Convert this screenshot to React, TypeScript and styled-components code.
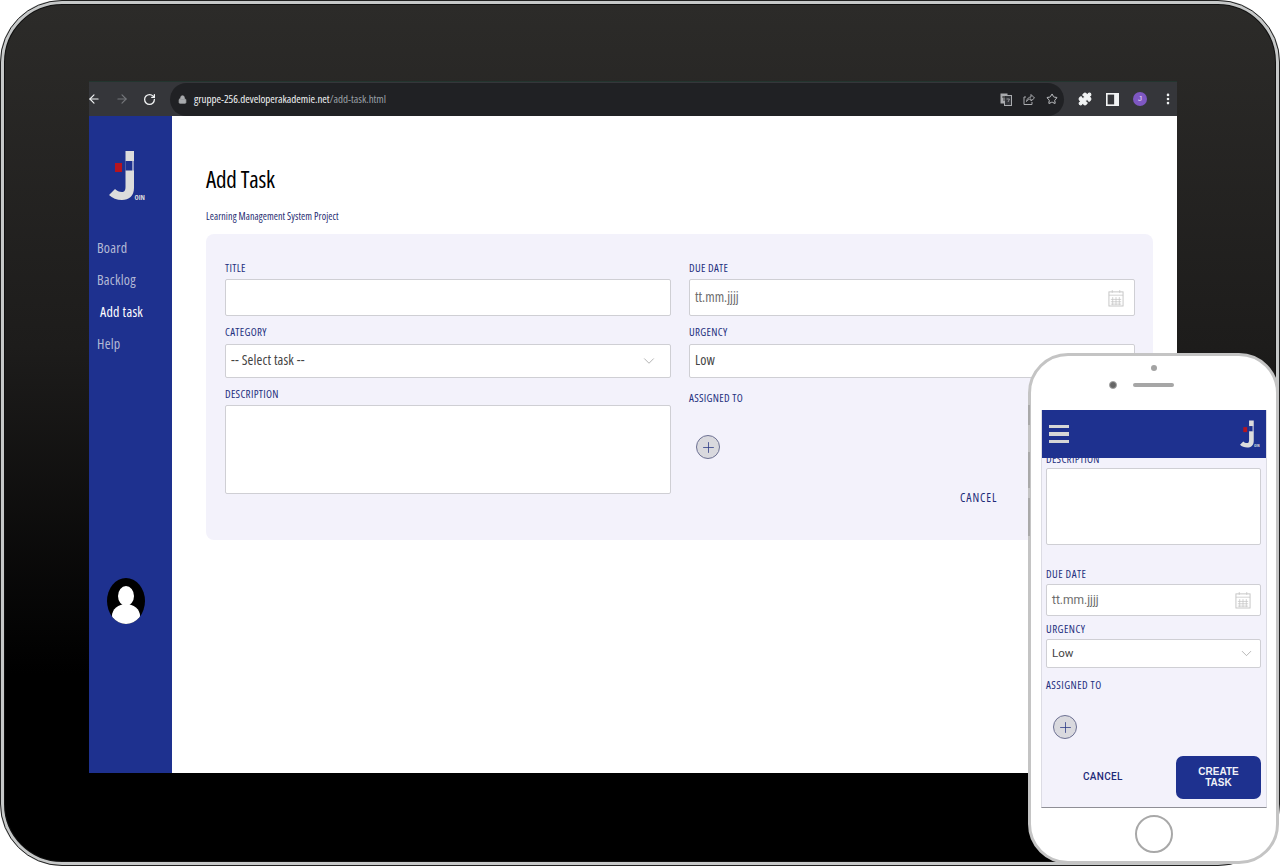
import React from "react";
import styled, { createGlobalStyle } from "styled-components";
import { ArrowLeft, ArrowRight, RotateCw, Lock, Star, Puzzle, EllipsisVertical, ChevronDown, Plus } from "lucide-react";

const NAVY = "#1e318f";
const PANEL = "#f3f2fb";
const NARROW = `"Open Sans", sans-serif`;

const Global = createGlobalStyle`
  html, body { margin: 0; padding: 0; background: #fff; }
  #root { width: 1280px; height: 866px; overflow: hidden; position: relative; font-stretch: 75%; }
  * { box-sizing: border-box; }
`;

const Stage = styled.div`
  position: relative;
  width: 1280px;
  height: 866px;
  background: #fff;
  overflow: hidden;
`;

const Tablet = styled.div`
  width: 1280px;
  height: 866px;
  padding: 77px 99px 89px 85px;
  border: 4px solid #c6c8c8;
  border-radius: 62px;
  background: linear-gradient(#2c2b29 0%, #1d1c1b 40%, #000 78%);
  box-shadow: 0 0 0 1px #111 inset;
  outline: 1px solid #222;
  outline-offset: -1px;
`;

const Screen = styled.div`
  width: 1088px;
  height: 692px;
  display: flex;
  flex-direction: column;
  background: #fff;
`;

const BrowserBar = styled.div`
  height: 35px;
  flex: none;
  display: flex;
  align-items: center;
  background: #35363a;
  border-top: 1px solid #23352f;
  color: #f1f3f4;
`;

const NavButtons = styled.div`
  width: 83px;
  margin-left: -2px;
  flex: none;
  display: flex;
  align-items: center;
  gap: 14px;
`;

const Omnibox = styled.div`
  width: 894px;
  height: 33px;
  flex: none;
  display: flex;
  align-items: center;
  gap: 7px;
  padding: 0 6px 0 8px;
  border-radius: 17px;
  background: #202124;
`;

const Url = styled.span`
  flex: 1;
  padding-bottom: 2px;
  font: 11px ${NARROW};
  font-stretch: 75%;
  letter-spacing: -0.03px;
  color: #f1f3f4;
`;

const UrlPath = styled.span`
  color: #9aa0a6;
`;

const OmniIcons = styled.div`
  display: flex;
  align-items: center;
  gap: 11px;
`;

const BarIcons = styled.div`
  flex: 1;
  display: flex;
  align-items: center;
  gap: 14px;
  padding-left: 14px;
`;

const Avatar = styled.div`
  width: 14px;
  height: 14px;
  border-radius: 50%;
  background: #7e57c2;
  color: #e8def8;
  font: 8px/14px "Liberation Sans", sans-serif;
  text-align: center;
`;

const Body = styled.div`
  flex: 1;
  display: flex;
  min-height: 0;
`;

const Sidebar = styled.nav`
  width: 83px;
  flex: none;
  display: flex;
  flex-direction: column;
  background: ${NAVY};
  padding-top: 34px;
`;

const SidebarLogo = styled.div`
  height: 52px;
  padding-left: 20px;
  margin-bottom: 38px;
`;

const NavLink = styled.a<{ $active?: boolean }>`
  display: block;
  height: 32px;
  padding-left: ${(p) => (p.$active ? 11 : 8)}px;
  font: 14px/16px ${NARROW};
  font-stretch: 75%;
  letter-spacing: 0.25px;
  color: ${(p) => (p.$active ? "#ffffff" : "#b4b9d6")};
`;

const UserMark = styled.div`
  width: 38px;
  height: 46px;
  margin: 210px 0 0 18px;
  position: relative;
  overflow: hidden;
  background: #000;
  border-radius: 50%;
`;

const UserHead = styled.div`
  position: absolute;
  left: 11px;
  top: 8px;
  width: 16px;
  height: 20px;
  border-radius: 50%;
  background: #fff;
`;

const UserBody = styled.div`
  position: absolute;
  left: 5px;
  top: 26px;
  width: 28px;
  height: 24px;
  border-radius: 50%;
  background: #fff;
`;

const Main = styled.main`
  flex: 1;
  padding: 50px 24px 0 34px;
`;

const Title = styled.h1`
  margin: 0;
  height: 26px;
  font: 400 23px/26px ${NARROW};
  font-stretch: 75%;
  letter-spacing: -0.2px;
  color: #000;
`;

const Subtitle = styled.p`
  margin: 18px 0 0;
  height: 12px;
  font: 10px/12px ${NARROW};
  font-stretch: 75%;
  letter-spacing: 0.09px;
  color: #1e2a70;
`;

const Card = styled.section`
  margin-top: 12px;
  height: 306px;
  padding: 27px 18px 0 19px;
  display: grid;
  grid-template-columns: 446px 446px;
  column-gap: 18px;
  border-radius: 8px;
  background: ${PANEL};
`;

const Column = styled.div`
  display: flex;
  flex-direction: column;
`;

const Label = styled.label<{ $gap?: number; $after?: number; $phone?: boolean }>`
  display: block;
  height: 14px;
  font: 11px/${(p) => (p.$phone ? 12 : 14)}px ${NARROW};
  font-stretch: 75%;
  letter-spacing: ${(p) => (p.$phone ? 0.45 : 0.3)}px;
  color: #24307e;
  margin-top: ${(p) => p.$gap ?? 0}px;
  margin-bottom: ${(p) => p.$after ?? 4}px;
`;

const Box = styled.div<{ $h: number; $phone?: boolean; $pr?: number }>`
  height: ${(p) => p.$h}px;
  display: flex;
  align-items: center;
  justify-content: space-between;
  padding: 0 ${(p) => p.$pr ?? 10}px 0 5px;
  background: #fff;
  border: 1px solid #cfcfd4;
  border-radius: 2px;
  font: ${(p) => (p.$phone ? `12px "Roboto", sans-serif` : `14px ${NARROW}`)};
  font-stretch: ${(p) => (p.$phone ? "100%" : "75%")};
  color: #444;
`;

const BoxText = styled.span<{ $phone?: boolean }>`
  padding-bottom: ${(p) => (p.$phone ? 2 : 3)}px;
  font-size: ${(p) => (p.$phone ? "11.5px" : "14px")};
  letter-spacing: ${(p) => (p.$phone ? 0 : 0.15)}px;
`;

const Placeholder = styled.span<{ $phone?: boolean }>`
  padding-bottom: ${(p) => (p.$phone ? 0 : 2)}px;
  color: #6d6d6d;
`;

const AddButton = styled.button<{ $left: number; $top: number }>`
  width: 24px;
  height: 24px;
  padding: 0;
  display: flex;
  align-items: center;
  justify-content: center;
  margin: ${(p) => p.$top}px 0 0 ${(p) => p.$left}px;
  border-radius: 50%;
  border: 1px solid #6d7193;
  background: #d9d9de;
  color: #2c3a86;
`;

const CancelDesktop = styled.span`
  align-self: flex-start;
  margin: 32px 0 0 271px;
  font: 12px/14px ${NARROW};
  font-stretch: 75%;
  color: #1e2a78;
  letter-spacing: 0.9px;
`;

const Phone = styled.div`
  position: absolute;
  left: 1028px;
  top: 353px;
  width: 251px;
  height: 511px;
  display: flex;
  flex-direction: column;
  align-items: center;
  padding: 54px 8px 0 9px;
  background: #fff;
  border: 3px solid #c4c4c4;
  border-radius: 40px;
`;

const SideKey = styled.div<{ $top: number; $h: number }>`
  position: absolute;
  left: -3px;
  top: ${(p) => p.$top}px;
  width: 2px;
  height: ${(p) => p.$h}px;
  background: #a9a9a9;
`;

const Sensor = styled.div`
  position: absolute;
  left: 120px;
  top: 9px;
  width: 6px;
  height: 6px;
  border-radius: 50%;
  background: #a3a3a3;
`;

const Camera = styled.div`
  position: absolute;
  left: 78px;
  top: 25px;
  width: 8px;
  height: 8px;
  border-radius: 50%;
  background: #666;
  border: 1.5px solid #a5a5a5;
`;

const Speaker = styled.div`
  position: absolute;
  left: 102px;
  top: 27px;
  width: 41px;
  height: 4px;
  border-radius: 2px;
  background: #a6a6a6;
`;

const PhoneScreen = styled.div`
  width: 226px;
  height: 398px;
  flex: none;
  display: flex;
  flex-direction: column;
  background: ${PANEL};
  border-bottom: 1px solid #8f8f96;
  border-left: 1px solid #dcdce4;
  border-right: 1px solid #dcdce4;
  overflow: hidden;
`;

const PhoneHeader = styled.header`
  height: 48px;
  flex: none;
  margin: 0 -1px;
  display: flex;
  align-items: center;
  justify-content: space-between;
  padding: 0 7px 0 8px;
  background: ${NAVY};
  position: relative;
  z-index: 1;
`;

const Burger = styled.div`
  width: 20px;
  display: flex;
  flex-direction: column;
  gap: 4px;
`;

const BurgerLine = styled.div`
  height: 3.5px;
  background: #d6d6d6;
`;

const PhoneContent = styled.div`
  flex: 1;
  padding: 0 5px 0 4px;
  display: flex;
  flex-direction: column;
`;

const Clipped = styled.div`
  height: 16px;
  margin-top: -6px;
`;

const PhoneActions = styled.div`
  display: flex;
  align-items: center;
  justify-content: space-between;
  margin-top: 17px;
`;

const PhoneCancel = styled.span`
  margin: 0 0 2px 37px;
  font: 500 10px "Roboto", sans-serif;
  color: #1e2a78;
  letter-spacing: 0.3px;
`;

const CreateButton = styled.button`
  width: 85px;
  height: 43px;
  padding: 0 0 2px;
  border: none;
  border-radius: 7px;
  background: ${NAVY};
  color: #f1f2f8;
  font: 700 10px/11px "Liberation Sans", sans-serif;
`;

const HomeButton = styled.div`
  width: 38px;
  height: 38px;
  margin-top: 7px;
  flex: none;
  border-radius: 50%;
  border: 2px solid #a8a8a8;
  background: #fff;
`;

const Logo = ({ scale = 1 }: { scale?: number }) => (
  <svg width={36 * scale} height={52 * scale} viewBox="0 0 36 52" aria-hidden>
    <path d="M16.500 1H25V38C25 46 20 50 13 50C8 50 3 48 0 45L6 39C8 41 10 42 13 42C15 42 16.500 41 16.500 37Z" fill="#dcdcdc" />
    <rect x="16.500" y="11" width="6.500" height="9.500" fill={NAVY} />
    <rect x="23" y="11" width="2" height="9.500" fill="#8f97c4" />
    <rect x="6" y="13" width="7" height="9" fill="#b5141f" />
    <text x="25.500" y="49.500" fontSize="7" fontWeight="700" fill="#dcdcdc" fontFamily="Open Sans, sans-serif" style={{ fontStretch: "75%" }}>OIN</text>
  </svg>
);

const Calendar = () => (
  <svg width="16" height="18" viewBox="0 0 17 19" fill="none" stroke="#c4c4c4" aria-hidden>
    <rect x="1" y="3" width="15" height="15" />
    <path d="M1 6.500h15M3 11h11M3 13.500h11M3 16h11M5 8.500v8.500M8.500 8.500v8.500M12 8.500v8.500M4.500 1v3M12.500 1v3" strokeWidth="0.8" />
  </svg>
);

const Translate = () => (
  <svg width="12" height="13" viewBox="0 0 12 13" fill="none" aria-hidden>
    <rect x="0.500" y="0.500" width="7" height="10" fill="#a9abae" />
    <rect x="4.500" y="2.500" width="7" height="10" fill="#33353a" stroke="#a9abae" />
    <path d="M2 4h4M4 3v5" stroke="#222" strokeWidth="0.8" />
    <path d="M6.500 6h3M8 9l1.500-3" stroke="#a9abae" strokeWidth="0.8" />
  </svg>
);

const ShareIcon = () => (
  <svg width="12" height="12" viewBox="0 0 12 12" fill="none" stroke="#a9abae" strokeWidth="1" aria-hidden>
    <path d="M3 4H1v7.500h8V9M3.500 8.500C4 5.500 6 4 8 4V1.500L11.500 5 8 8V6C6 6 4.500 7 3.500 8.500z" />
  </svg>
);

const SidePanel = () => (
  <svg width="13" height="13" viewBox="0 0 12 12" aria-hidden>
    <rect width="12" height="12" fill="#f1f3f4" />
    <rect x="1.500" y="1.500" width="6" height="9" fill="#35363a" />
  </svg>
);

export default function App() {
  return (
    <Stage>
      <Global />
      <Tablet>
        <Screen>
          <BrowserBar>
            <NavButtons>
              <ArrowLeft size={14} strokeWidth={2} />
              <ArrowRight size={14} strokeWidth={2} color="#74767a" />
              <RotateCw size={13} strokeWidth={2.4} />
            </NavButtons>
            <Omnibox>
              <Lock size={9} fill="#a9abae" color="#a9abae" />
              <Url>
                gruppe-256.developerakademie.net<UrlPath>/add-task.html</UrlPath>
              </Url>
              <OmniIcons>
                <Translate />
                <ShareIcon />
                <Star size={12} color="#c4c6c9" strokeWidth={2} />
              </OmniIcons>
            </Omnibox>
            <BarIcons>
              <Puzzle size={14} fill="#f1f3f4" color="#f1f3f4" />
              <SidePanel />
              <Avatar>J</Avatar>
              <EllipsisVertical size={14} color="#f1f3f4" strokeWidth={2.5} />
            </BarIcons>
          </BrowserBar>
          <Body>
            <Sidebar>
              <SidebarLogo>
                <Logo />
              </SidebarLogo>
              <NavLink>Board</NavLink>
              <NavLink>Backlog</NavLink>
              <NavLink $active>Add task</NavLink>
              <NavLink>Help</NavLink>
              <UserMark>
                <UserHead />
                <UserBody />
              </UserMark>
            </Sidebar>
            <Main>
              <Title>Add Task</Title>
              <Subtitle>Learning Management System Project</Subtitle>
              <Card>
                <Column>
                  <Label>TITLE</Label>
                  <Box $h={37} />
                  <Label $gap={9} $after={5}>CATEGORY</Label>
                  <Box $h={34} $pr={12}>
                    <BoxText>-- Select task --</BoxText>
                    <ChevronDown size={18} color="#9a9a9a" strokeWidth={1} />
                  </Box>
                  <Label $gap={9} $after={4}>DESCRIPTION</Label>
                  <Box $h={89} />
                </Column>
                <Column>
                  <Label>DUE DATE</Label>
                  <Box $h={37}>
                    <Placeholder>tt.mm.jjjj</Placeholder>
                    <Calendar />
                  </Box>
                  <Label $gap={9} $after={5}>URGENCY</Label>
                  <Box $h={34}>
                    <BoxText>Low</BoxText>
                  </Box>
                  <Label $gap={13}>ASSIGNED TO</Label>
                  <AddButton $left={7} $top={26}>
                    <Plus size={17} strokeWidth={1.1} />
                  </AddButton>
                  <CancelDesktop>CANCEL</CancelDesktop>
                </Column>
              </Card>
            </Main>
          </Body>
        </Screen>
      </Tablet>

      <Phone>
        <SideKey $top={49} $h={20} />
        <SideKey $top={96} $h={36} />
        <SideKey $top={142} $h={38} />
        <Sensor />
        <Camera />
        <Speaker />
        <PhoneScreen>
          <PhoneHeader>
            <Burger>
              <BurgerLine />
              <BurgerLine />
              <BurgerLine />
            </Burger>
            <Logo scale={0.55} />
          </PhoneHeader>
          <PhoneContent>
            <Clipped>
              <Label>DESCRIPTION</Label>
            </Clipped>
            <Box $phone $h={77} />
            <Label $phone $gap={23} $after={2}>DUE DATE</Label>
            <Box $phone $h={32} $pr={9}>
              <Placeholder $phone>tt.mm.jjjj</Placeholder>
              <Calendar />
            </Box>
            <Label $phone $gap={7} $after={2}>URGENCY</Label>
            <Box $phone $h={29} $pr={5}>
              <BoxText $phone>Low</BoxText>
              <ChevronDown size={17} color="#9a9a9a" strokeWidth={1} />
            </Box>
            <Label $phone $gap={11} $after={0}>ASSIGNED TO</Label>
            <AddButton $left={7} $top={22}>
              <Plus size={17} strokeWidth={1.1} />
            </AddButton>
            <PhoneActions>
              <PhoneCancel>CANCEL</PhoneCancel>
              <CreateButton>
                CREATE
                <br />
                TASK
              </CreateButton>
            </PhoneActions>
          </PhoneContent>
        </PhoneScreen>
        <HomeButton />
      </Phone>
    </Stage>
  );
}
